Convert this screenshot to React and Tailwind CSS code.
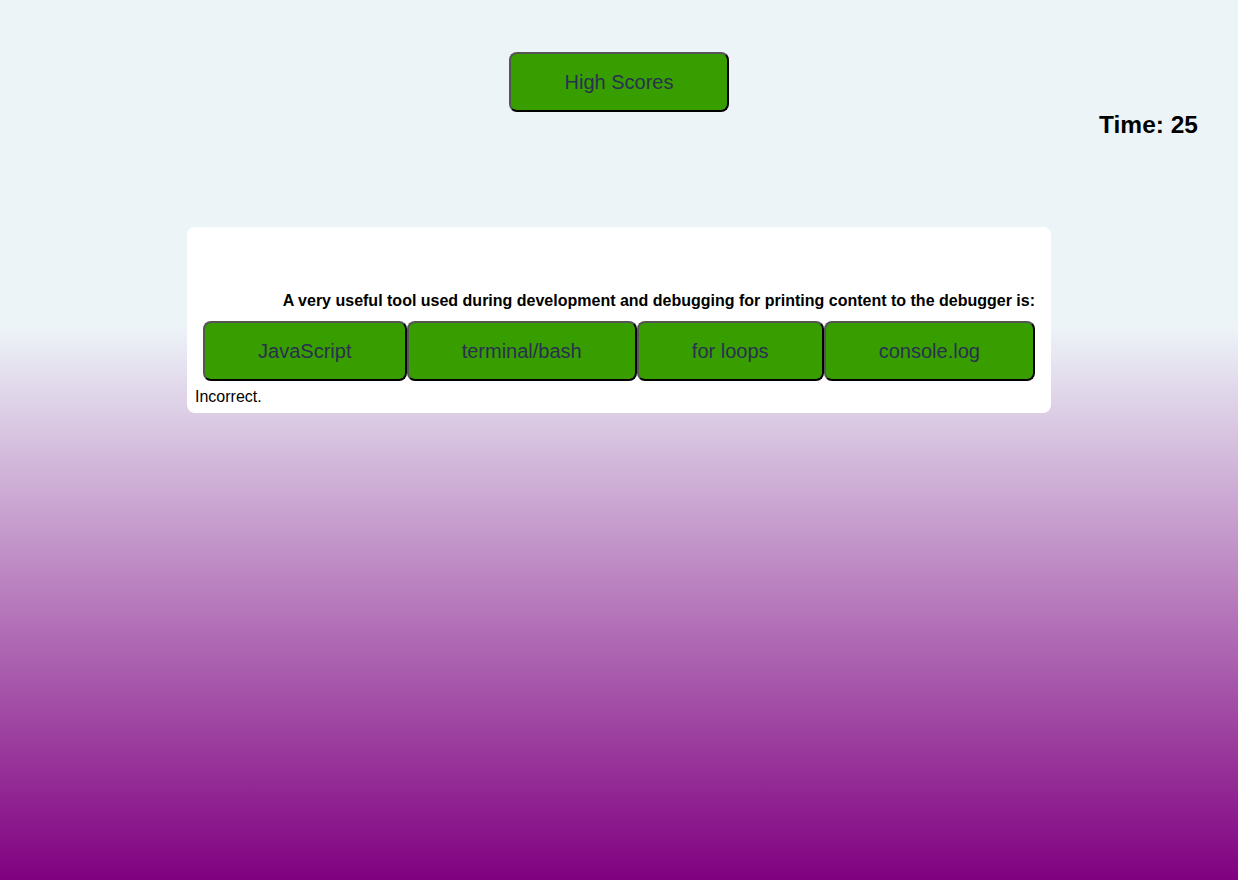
import React from 'react';

const answers = ['JavaScript', 'terminal/bash', 'for loops', 'console.log'];

const btn =
  'rounded-lg border-2 border-t-[#555] border-l-[#555] border-b-black border-r-black bg-[#389e00] text-[20px] text-[#283150] cursor-pointer';

export default function App() {
  return (
    <div
      className="min-h-[880px] w-full bg-[linear-gradient(to_bottom,#edf4f8_0%,#edf4f8_37%,#800080_100%)] font-['Liberation_Sans',Arial,sans-serif]"
    >
      <div className="flex justify-center pt-[52px]">
        <button type="button" className={`${btn} h-[60px] w-[220px]`}>
          High Scores
        </button>
      </div>
      <div className="flex justify-end pr-[40px]">
        <p className="-mt-px text-[24.5px] font-bold leading-[28px] text-black">Time: 25</p>
      </div>
      <div className="mx-auto mt-[88px] w-[864px] rounded-lg bg-white px-2 pb-[7px] pt-[65px]">
        <p className="px-2 text-right text-[16px] font-bold leading-[18px] text-black">
          A very useful tool used during development and debugging for printing content to the debugger is:
        </p>
        <div className="mx-2 mt-[11px] flex">
          {answers.map((a) => (
            <button key={a} type="button" className={`${btn} h-[60px] grow px-5`}>
              {a}
            </button>
          ))}
        </div>
        <p className="mt-[7px] text-[16px] leading-[18px] text-black">Incorrect.</p>
      </div>
    </div>
  );
}
